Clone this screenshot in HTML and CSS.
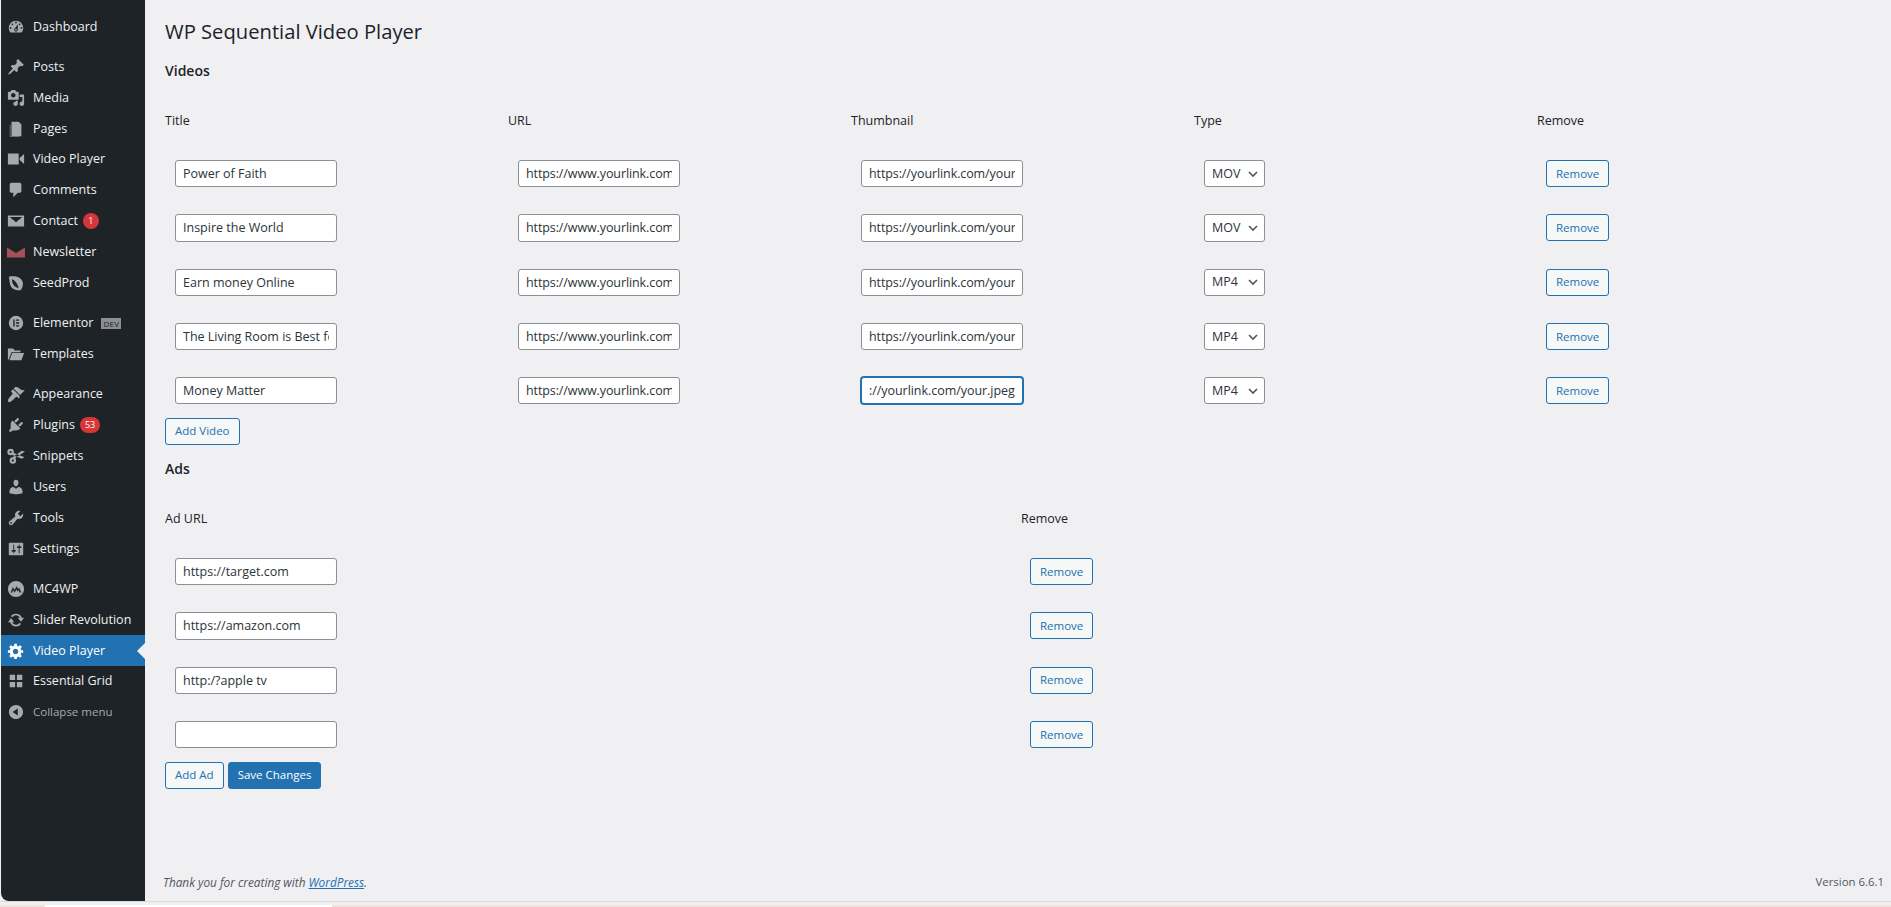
FILE: index.html
```html
<!DOCTYPE html>
<html lang="en">
<head>
  <meta charset="UTF-8">
  <title>WP Sequential Video Player</title>
  <link rel="stylesheet" href="styles.css">
</head>
<body>
<div class="wrap">
  <!-- admin menu -->
  <nav class="menu">
    <ul class="group">
      <li><svg viewBox="0 0 20 20"><path d="M3.76 16h12.48c1.1-1.37 1.76-3.11 1.76-5 0-4.42-3.58-8-8-8s-8 3.58-8 8c0 1.89.66 3.63 1.76 5zM10 4c.55 0 1 .45 1 1s-.45 1-1 1-1-.45-1-1 .45-1 1-1zM6 6c.55 0 1 .45 1 1s-.45 1-1 1-1-.45-1-1 .45-1 1-1zm8 0c.55 0 1 .45 1 1s-.45 1-1 1-1-.45-1-1 .45-1 1-1zm-5.37 5.55L12 7v6c0 1.1-.9 2-2 2s-2-.9-2-2c0-.57.24-1.08.63-1.45zM4 10c.55 0 1 .45 1 1s-.45 1-1 1-1-.45-1-1 .45-1 1-1zm12 0c.55 0 1 .45 1 1s-.45 1-1 1-1-.45-1-1 .45-1 1-1zm-5 3c0-.55-.45-1-1-1s-1 .45-1 1 .45 1 1 1 1-.45 1-1z"/></svg>Dashboard</li>
    </ul>
    <ul class="group">
      <li><svg viewBox="0 0 20 20"><path d="M10.44 3.02l1.82-1.82 6.36 6.35-1.83 1.82c-1.05-.68-2.48-.57-3.41.36l-.75.75c-.92.93-1.04 2.35-.35 3.41l-1.83 1.82-2.41-2.41-2.8 2.79c-.42.42-3.38 2.71-3.8 2.29s1.86-3.39 2.28-3.81l2.79-2.79L4.1 9.36l1.83-1.82c1.05.69 2.48.57 3.4-.36l.75-.75c.93-.92 1.05-2.35.36-3.41z"/></svg>Posts</li>
      <li><svg viewBox="0 0 20 20"><path d="M13 11V4c0-.55-.45-1-1-1h-1.67L9 1H5L3.67 3H2c-.55 0-1 .45-1 1v7c0 .55.45 1 1 1h10c.55 0 1-.45 1-1zM7 4.500c1.380 0 2.500 1.120 2.500 2.500S8.380 9.500 7 9.500 4.500 8.380 4.500 7 5.620 4.500 7 4.500zM14 6h5v10.500c0 1.380-1.120 2.500-2.500 2.500S14 17.880 14 16.500s1.120-2.500 2.500-2.500c.17 0 .34.02.5.05V9h-3V6zm-4 8.050V13h2v3.500c0 1.380-1.120 2.500-2.500 2.500S7 17.880 7 16.500 8.120 14 9.500 14c.17 0 .34.02.5.05z"/></svg>Media</li>
      <li><svg viewBox="0 0 20 20"><path d="M5 2h8l3 3v13H5z"/><path d="M3 5h1v13h10v1H3z" opacity=".6"/></svg>Pages</li>
      <li><svg viewBox="0 0 20 20"><path d="M1 4h12v12H1zM14 9l5-4.500v11L14 11z"/></svg>Video Player</li>
      <li><svg viewBox="0 0 20 20"><path d="M5 2h9c1.100 0 2 .9 2 2v7c0 1.100-.9 2-2 2h-2l-5 5v-5H5c-1.100 0-2-.9-2-2V4c0-1.100.9-2 2-2z"/></svg>Comments</li>
      <li><svg viewBox="0 0 20 20"><path d="M1 4h18v12H1zM3 5.500l7 6 7-6z" fill-rule="evenodd"/></svg>Contact<span class="badge">1</span></li>
      <li><svg class="red" viewBox="0 0 20 20"><path d="M0 5l10 6 10-6v11H0z"/></svg>Newsletter</li>
      <li><svg viewBox="0 0 20 20"><path fill-rule="evenodd" d="M2 3c7-1.500 14 .5 15.500 6 .8 3.500-.5 7-2.500 9-5 .5-10-1-11.500-6C3 9 2.500 6 2 3zm3.500 2.500c0 3 .8 6 3 8 1.500 1.300 3 2 4.500 2.300-1-4.500-3-8-7.500-10.300z"/></svg>SeedProd</li>
    </ul>
    <ul class="group">
      <li><svg viewBox="0 0 20 20"><path fill-rule="evenodd" d="M10 2a8 8 0 100 16 8 8 0 000-16zM7 6h1.500v8H7zm3 0h3.500v1.500H10zm0 3.200h3.500v1.500H10zm0 3.300h3.500V14H10z"/></svg>Elementor<span class="dev">DEV</span></li>
      <li><svg viewBox="0 0 20 20"><path d="M1 4h6l1.500 2H15v2H5l-3 8H1zM5.700 9H19l-3 8H2.700z"/></svg>Templates</li>
    </ul>
    <ul class="group">
      <li><svg viewBox="0 0 20 20"><path d="M14.480 11.060L7.410 3.990l1.500-1.500c.5-.56 2.300-.47 3.510.32 1.210.8 1.430 1.280 2.910 2.100 1.180.64 2.450 1.260 4.450.85zm-.71.71L6.700 4.700 4.930 6.470c-.39.39-.39 1.020 0 1.410l1.060 1.060c.39.39.39 1.030 0 1.420-.6.6-5 5-5 7 0 1.500 1.500 2 2.500 1.500 2-1 5.500-4.500 6.500-5.500.39-.39 1.030-.39 1.420 0l1.060 1.060c.39.39 1.020.39 1.410 0z"/></svg>Appearance</li>
      <li><svg viewBox="0 0 20 20"><path d="M13.110 4.360L9.870 7.600 8 5.730l3.240-3.240c.35-.34 1.050-.2 1.560.32.52.51.66 1.210.31 1.550zm-8 1.770l.91-1.120 9.010 9.010-1.190.84c-.71.71-2.630 1.160-3.820 1.160H6.140L4.900 17.260c-.59.59-1.540.59-2.120 0-.59-.58-.59-1.530 0-2.120l1.240-1.240v-3.880c0-1.130.4-3.190 1.090-3.890zm7.260 3.970l3.240-3.240c.34-.35 1.040-.21 1.550.31.52.51.66 1.210.31 1.550l-3.240 3.250z"/></svg>Plugins<span class="badge wide">53</span></li>
      <li><svg viewBox="0 0 20 20"><path fill-rule="evenodd" d="M4 2a3.600 3.600 0 100 7.200A3.600 3.600 0 004 2zm0 2.400a1.200 1.200 0 110 2.400 1.200 1.200 0 010-2.400zM6.500 11.500a3.600 3.600 0 100 7.200 3.600 3.600 0 000-7.200zm0 2.400a1.200 1.200 0 110 2.400 1.200 1.200 0 010-2.400z"/><path d="M6.500 6L19.500 11.500l-3 1.500L5.800 9zM8 13L20 5l-3.500-.8L6.500 11z"/></svg>Snippets</li>
      <li><svg viewBox="0 0 20 20"><path d="M10 9.250c-2.270 0-2.730-3.440-2.730-3.440C7 4.020 7.820 2 9.970 2c2.160 0 2.980 2.020 2.710 3.810 0 0-.41 3.440-2.680 3.440zm0 2.570L12.720 10c2.390 0 4.520 2.330 4.520 4.530v2.490s-3.650 1.130-7.240 1.130c-3.650 0-7.240-1.130-7.240-1.130v-2.490c0-2.250 1.940-4.480 4.470-4.480z"/></svg>Users</li>
      <li><svg viewBox="0 0 20 20"><path d="M16.680 9.770c-1.340 1.340-3.300 1.670-4.950.99l-5.410 6.520c-.99.99-2.590.99-3.580 0s-.99-2.590 0-3.570l6.520-5.420c-.68-1.650-.35-3.610.99-4.950 1.280-1.280 3.120-1.620 4.720-1.060l-2.890 2.890 2.820 2.820 2.860-2.870c.53 1.580.18 3.390-1.080 4.650zM3.810 16.210c.4.39 1.040.39 1.430 0 .4-.4.4-1.040 0-1.430-.39-.4-1.030-.4-1.430 0-.39.39-.39 1.030 0 1.430z"/></svg>Tools</li>
      <li><svg viewBox="0 0 20 20"><path d="M18 16V4c0-.55-.45-1-1-1H3c-.55 0-1 .45-1 1v12c0 .55.45 1 1 1h14c.55 0 1-.45 1-1zM8 11h1c.55 0 1 .45 1 1s-.45 1-1 1H8v1.500c0 .28-.22.5-.5.5s-.5-.22-.5-.5V13H6c-.55 0-1-.45-1-1s.45-1 1-1h1V5.500c0-.28.22-.5.5-.5s.5.22.5.5V11zm5-2h-1c-.55 0-1-.45-1-1s.45-1 1-1h1V5.500c0-.28.22-.5.5-.5s.5.22.5.5V7h1c.55 0 1 .45 1 1s-.45 1-1 1h-1v5.500c0 .28-.22.5-.5.5s-.5-.22-.5-.5V9z"/></svg>Settings</li>
    </ul>
    <ul class="group">
      <li><svg viewBox="0 0 20 20"><path fill-rule="evenodd" d="M10 1a9 9 0 100 18 9 9 0 000-18zM4 14l2.500-6 2 3 2-4 2 3 1-1.500L16 14h-2l-1-3-1 2-1.500-2.500L8.500 14 6.500 11 6 14z"/></svg>MC4WP</li>
      <li><svg viewBox="0 0 20 20"><path d="M10 3a7 7 0 016.500 4.500H19L15.500 12 12 7.500h2.300A4.800 4.800 0 006 7L4.300 5.500A7 7 0 0110 3zM1 8l3.500-.2L8 12.500H5.700A4.800 4.800 0 0014 13l1.700 1.500A7 7 0 013.500 12.500H1L4.500 8z"/></svg>Slider Revolution</li>
      <li class="active"><svg viewBox="0 0 20 20"><path d="M18 12h-2.180c-.17.7-.44 1.350-.81 1.930l1.540 1.540-2.100 2.100-1.540-1.540c-.58.36-1.230.63-1.910.79V19H8v-2.180c-.68-.16-1.330-.43-1.910-.79l-1.540 1.540-2.120-2.120 1.540-1.540c-.36-.58-.63-1.230-.79-1.910H1V9.030h2.170c.16-.7.44-1.350.8-1.940L2.430 5.550l2.100-2.100 1.540 1.540c.58-.37 1.240-.64 1.930-.81V2h3v2.180c.68.16 1.330.43 1.910.79l1.540-1.540 2.120 2.120-1.540 1.540c.36.59.64 1.240.8 1.940H18V12zm-8.500 1.500c1.660 0 3-1.340 3-3s-1.340-3-3-3-3 1.340-3 3 1.340 3 3 3z"/></svg>Video Player</li>
      <li><svg viewBox="0 0 20 20"><path d="M3 3h6v6H3zM11 3h6v6h-6zM3 11h6v6H3zM11 11h6v6h-6z"/></svg>Essential Grid</li>
      <li class="collapse"><svg viewBox="0 0 20 20"><path d="M10 2.160c4.330 0 7.840 3.510 7.840 7.840s-3.510 7.840-7.840 7.840S2.160 14.330 2.160 10 5.710 2.160 10 2.160zm2 11.720V6.120L6.180 9.970z"/></svg>Collapse menu</li>
    </ul>
  </nav>

  <!-- page -->
  <main class="content">
    <h1>WP Sequential Video Player</h1>
    <h2 class="first">Videos</h2>
    <table>
      <tr><th>Title</th><th>URL</th><th>Thumbnail</th><th>Type</th><th>Remove</th></tr>
      <tr>
        <td><input type="text" value="Power of Faith"></td>
        <td><input type="text" class="link" value="https://www.yourlink.com/your.mp4"></td>
        <td><input type="text" class="thumb" value="https://yourlink.com/your.jpeg"></td>
        <td><select><option>MOV</option></select></td>
        <td><button class="btn">Remove</button></td>
      </tr>
      <tr>
        <td><input type="text" value="Inspire the World"></td>
        <td><input type="text" class="link" value="https://www.yourlink.com/your.mp4"></td>
        <td><input type="text" class="thumb" value="https://yourlink.com/your.jpeg"></td>
        <td><select><option>MOV</option></select></td>
        <td><button class="btn">Remove</button></td>
      </tr>
      <tr>
        <td><input type="text" value="Earn money Online"></td>
        <td><input type="text" class="link" value="https://www.yourlink.com/your.mp4"></td>
        <td><input type="text" class="thumb" value="https://yourlink.com/your.jpeg"></td>
        <td><select><option>MP4</option></select></td>
        <td><button class="btn">Remove</button></td>
      </tr>
      <tr>
        <td><input type="text" value="The Living Room is Best for Family"></td>
        <td><input type="text" class="link" value="https://www.yourlink.com/your.mp4"></td>
        <td><input type="text" class="thumb" value="https://yourlink.com/your.jpeg"></td>
        <td><select><option>MP4</option></select></td>
        <td><button class="btn">Remove</button></td>
      </tr>
      <tr>
        <td><input type="text" value="Money Matter"></td>
        <td><input type="text" class="link" value="https://www.yourlink.com/your.mp4"></td>
        <td><input type="text" class="focused" value="://yourlink.com/your.jpeg"></td>
        <td><select><option>MP4</option></select></td>
        <td><button class="btn">Remove</button></td>
      </tr>
    </table>
    <div class="actions"><button class="btn">Add Video</button></div>

    <h2>Ads</h2>
    <table>
      <tr><th class="ad-col">Ad URL</th><th>Remove</th></tr>
      <tr><td><input type="text" value="https://target.com"></td><td><button class="btn">Remove</button></td></tr>
      <tr><td><input type="text" value="https://amazon.com"></td><td><button class="btn">Remove</button></td></tr>
      <tr><td><input type="text" value="http:/?apple tv"></td><td><button class="btn">Remove</button></td></tr>
      <tr><td><input type="text" value=""></td><td><button class="btn">Remove</button></td></tr>
    </table>
    <div class="actions"><button class="btn">Add Ad</button><button class="btn primary">Save Changes</button></div>

    <footer class="foot">
      <em>Thank you for creating with <a href="#">WordPress</a>.</em>
      <span class="ver">Version 6.6.1</span>
    </footer>
  </main>
</div>
<div class="strip"><i></i><b></b><i class="rest"></i></div>
</body>
</html>
```

FILE: styles.css
```css
*{box-sizing:border-box}
html,body{height:100%}
body{margin:0;height:907px;overflow:hidden;background:#f0f0f3;color:#1d2327;font:12.5px/20px "Open Sans","Noto Sans",sans-serif}
.wrap{display:flex;height:902px;border-bottom:1px solid #dcdcde;margin-bottom:3px}
/* admin menu */
.menu{width:144px;margin-left:1px;background:#1d2327;color:#f0f0f1;padding-top:11.2px;border-bottom-left-radius:8px;flex:none}
.group{list-style:none;margin:0 0 9.5px;padding:0}
.group li{display:flex;align-items:center;height:30.85px;padding-left:6px;white-space:nowrap;position:relative}
.group svg{width:18px;height:18px;margin-right:8px;fill:#a7aaad;flex:none}
.group svg.red{fill:#a4505a}
.group .active{background:#2271b1;color:#fff}
.group .active svg{fill:#fff}
.group .active:after{content:"";position:absolute;right:0;top:50%;margin-top:-8px;border:8px solid transparent;border-right-color:#f0f0f3;border-left-width:0}
.group .collapse{color:#a7aaad;font-size:11.5px}
.badge{margin-left:5px;min-width:16px;height:16px;padding:0 5px;border-radius:8px;background:#d63638;color:#fff;font-size:9px;line-height:16px;text-align:center}
.dev{margin-left:8px;padding:0 2px;height:11px;background:#8c8f94;color:#1d2327;font-size:8px;line-height:11px;letter-spacing:.3px}
/* page */
.content{flex:1;min-width:0;padding:14px 7px 0 20px;display:flex;flex-direction:column}
h1{margin:0;font-size:20.2px;font-weight:400;line-height:34px}
h2{margin:14px 0 13px;font-size:14px;font-weight:600;line-height:20px}
h2.first{margin-top:13px}
table{width:1715px;border-collapse:collapse;table-layout:fixed}
th{height:52.5px;padding:2px 0 0;font-weight:400;text-align:left}
th.ad-col{width:856px}
td{height:54.3px;padding:0 10px}
td .btn{margin-left:-1px}
input,select{display:block;height:27.3px;background:#fff;border:1px solid #8c8f94;border-radius:3px;color:#2c3338;font:inherit;outline:0}
input{width:162px;padding:0 7px}
input.link{letter-spacing:-.1px}
input.thumb{letter-spacing:-.1px}
input.focused{border-color:#2271b1;box-shadow:0 0 0 1px #2271b1;letter-spacing:-.05px}
select{width:61px;padding:0 20px 0 7px;appearance:none;background:#fff url("data:image/svg+xml,%3Csvg xmlns='http://www.w3.org/2000/svg' width='16' height='16'%3E%3Cpath d='M4 6l4 4 4-4' fill='none' stroke='%23555' stroke-width='1.600'/%3E%3C/svg%3E") no-repeat right 3px center}
.btn{display:block;height:27px;padding:0 9px;background:#f6f7f7;border:1px solid #2271b1;border-radius:3px;color:#2271b1;font:inherit;font-size:11.5px;cursor:pointer}
.btn.primary{background:#2271b1;color:#fff}
.actions{display:flex;gap:4px}
.foot{margin-top:auto;padding-bottom:9px;margin-left:-2px;display:flex;justify-content:space-between;color:#50575e;font-size:11.8px}
.foot a{color:#2271b1}
.ver{font-size:11.4px}
/* bottom edge */
.strip{display:flex;height:2px}
.strip i{width:45px;background:#efe4dc}
.strip b{width:287px;background:#fff}
.strip .rest{flex:1}
```
